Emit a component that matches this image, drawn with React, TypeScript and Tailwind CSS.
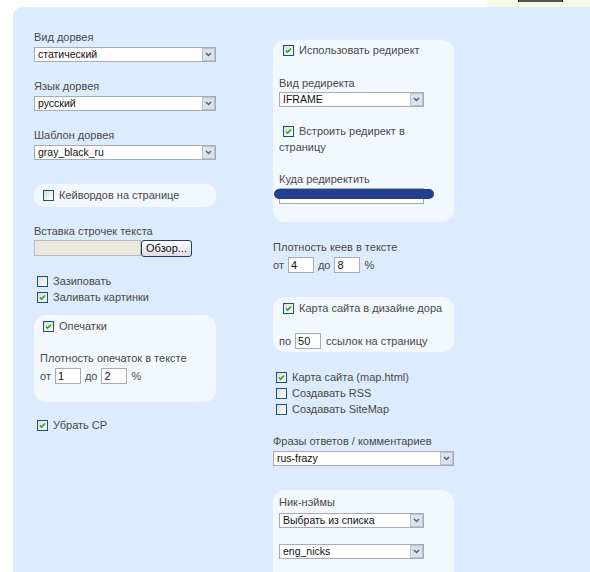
import React from 'react';

const Check: React.FC<{ checked?: boolean }> = ({ checked }) => (
  <span className="inline-flex items-center justify-center w-[11px] h-[11px] border border-[#1c5180] bg-gradient-to-br from-[#dcdcd7] to-white shrink-0">
    {checked && (
      <svg width="7" height="7" viewBox="0 0 7 7">
        <path d="M1 3.5l1.6 1.7L6 1.5" fill="none" stroke="#21a121" strokeWidth="1.6" />
      </svg>
    )}
  </span>
);

const CheckRow: React.FC<{ checked?: boolean; label: string; className?: string }> = ({ checked, label, className }) => (
  <div className={`flex items-center gap-[5px] h-[16px] ${className || ''}`}>
    <Check checked={checked} />
    <span>{label}</span>
  </div>
);

const Select: React.FC<{ value: string; w: string; className?: string }> = ({ value, w, className }) => (
  <div className={`flex items-center h-[15px] border border-[#a5acb5] bg-white ${w} ${className || ''}`}>
    <span className="flex-1 pl-[3px] text-[10.5px] leading-[13px] text-[#111] truncate">{value}</span>
    <span className="flex items-center justify-center w-[13px] h-[13px] bg-[#dde1ec] border border-[#b9c1d3]">
      <svg width="7" height="5" viewBox="0 0 7 5">
        <path d="M1 1l2.5 2.5L6 1" fill="none" stroke="#4d6185" strokeWidth="1.5" />
      </svg>
    </span>
  </div>
);

const Num: React.FC<{ value: string }> = ({ value }) => (
  <span className="inline-flex items-center w-[26px] h-[16px] border border-[#a5acb5] bg-white pl-[2px] text-[11px] text-[#111]">{value}</span>
);

const Label: React.FC<{ children: React.ReactNode; className?: string }> = ({ children, className }) => (
  <div className={`h-[16px] leading-[16px] ${className || ''}`}>{children}</div>
);

export default function App() {
  return (
    <div className="w-[590px] h-[572px] bg-white overflow-hidden text-[11px] text-[#4a4a4a]" style={{ fontFamily: '"Liberation Sans", Arial, sans-serif' }}>
      <div className="flex h-[7px]">
        <div className="flex-1" />
        <div className="w-[103px] bg-[#f5fbe2] flex">
          <div className="ml-[31px] w-[45px] h-[2px] bg-[#555] border-x border-black" />
        </div>
      </div>
      <div className="ml-[13px] h-[565px] rounded-tl-[9px] bg-[#dcebfd] flex pl-[21px]">
        {/* left column */}
        <div className="w-[182px] pt-[22px] flex flex-col">
          <Label>Вид дорвея</Label>
          <Select value="статический" w="w-[182px]" className="mt-[2px]" />
          <Label className="mt-[16px]">Язык дорвея</Label>
          <Select value="русский" w="w-[182px]" className="mt-[2px]" />
          <Label className="mt-[16px]">Шаблон дорвея</Label>
          <Select value="gray_black_ru" w="w-[182px]" className="mt-[2px]" />

          <div className="mt-[24px] h-[23px] rounded-[10px] bg-[#f3f8fe] flex items-center pl-[9px]">
            <CheckRow label="Кейвордов на странице" />
          </div>

          <Label className="mt-[16px]">Вставка строчек текста</Label>
          <div className="flex mt-[1px] h-[17px]">
            <span className="w-[107px] h-[16px] bg-[#ebe9dd] border border-[#b8bbc0]" />
            <span className="w-[51px] h-[17px] rounded-[3px] border border-[#223a6e] bg-gradient-to-b from-white to-[#dcdce2] text-[#111] text-[11px] flex items-center justify-center">Обзор...</span>
          </div>

          <CheckRow label="Зазиповать" className="mt-[16px] pl-[3px]" />
          <CheckRow checked label="Заливать картинки" className="pl-[3px]" />

          <div className="mt-[10px] h-[87px] rounded-[12px] bg-[#f3f8fe] flex flex-col pt-[3px] px-[6px]">
            <CheckRow checked label="Опечатки" className="pl-[3px]" />
            <Label className="mt-[16px]">Плотность опечаток в тексте</Label>
            <div className="flex items-center gap-[4px] h-[18px] mt-[1px]">
              <span>от</span>
              <Num value="1" />
              <span>до</span>
              <Num value="2" />
              <span>%</span>
            </div>
          </div>

          <CheckRow checked label="Убрать CP" className="mt-[15px] pl-[3px]" />
        </div>

        {/* right column */}
        <div className="ml-[57px] w-[181px] pt-[33px] flex flex-col">
          <div className="h-[182px] rounded-[12px] bg-[#f3f8fe] flex flex-col pt-[2px] px-[6px]">
            <CheckRow checked label="Использовать редирект" className="pl-[4px]" />
            <Label className="mt-[17px]">Вид редиректа</Label>
            <Select value="IFRAME" w="w-[145px]" className="mt-[1px]" />
            <CheckRow checked label="Встроить редирект в" className="mt-[16px] pl-[4px]" />
            <Label>страницу</Label>
            <Label className="mt-[16px]">Куда редиректить</Label>
            <div className="relative mt-[1px] w-[145px] h-[16px] border border-[#a5acb5] bg-white">
              <span className="absolute left-[-6px] top-0 w-[160px] h-[10px] rounded-full bg-[#213f8e]" />
            </div>
          </div>

          <Label className="mt-[17px]">Плотность кеев в тексте</Label>
          <div className="flex items-center gap-[4px] h-[18px] mt-[1px]">
            <span>от</span>
            <Num value="4" />
            <span>до</span>
            <Num value="8" />
            <span>%</span>
          </div>

          <div className="mt-[23px] h-[55px] rounded-[12px] bg-[#f3f8fe] flex flex-col pt-[3px] px-[6px]">
            <CheckRow checked label="Карта сайта в дизайне дора" className="pl-[4px]" />
            <div className="flex items-center gap-[4px] h-[18px] mt-[16px]">
              <span>по</span>
              <Num value="50" />
              <span className="ml-[1px]">ссылок на страницу</span>
            </div>
          </div>

          <CheckRow checked label="Карта сайта (map.html)" className="mt-[17px] pl-[3px]" />
          <CheckRow label="Создавать RSS" className="pl-[3px]" />
          <CheckRow label="Создавать SiteMap" className="pl-[3px]" />

          <Label className="mt-[16px]">Фразы ответов / комментариев</Label>
          <Select value="rus-frazy" w="w-[181px]" className="mt-[2px]" />

          <div className="mt-[24px] flex-1 rounded-t-[12px] bg-[#f3f8fe] flex flex-col pt-[4px] px-[6px]">
            <Label>Ник-нэймы</Label>
            <Select value="Выбрать из списка" w="w-[145px]" className="mt-[3px]" />
            <Select value="eng_nicks" w="w-[145px]" className="mt-[16px]" />
          </div>
        </div>
      </div>
    </div>
  );
}
